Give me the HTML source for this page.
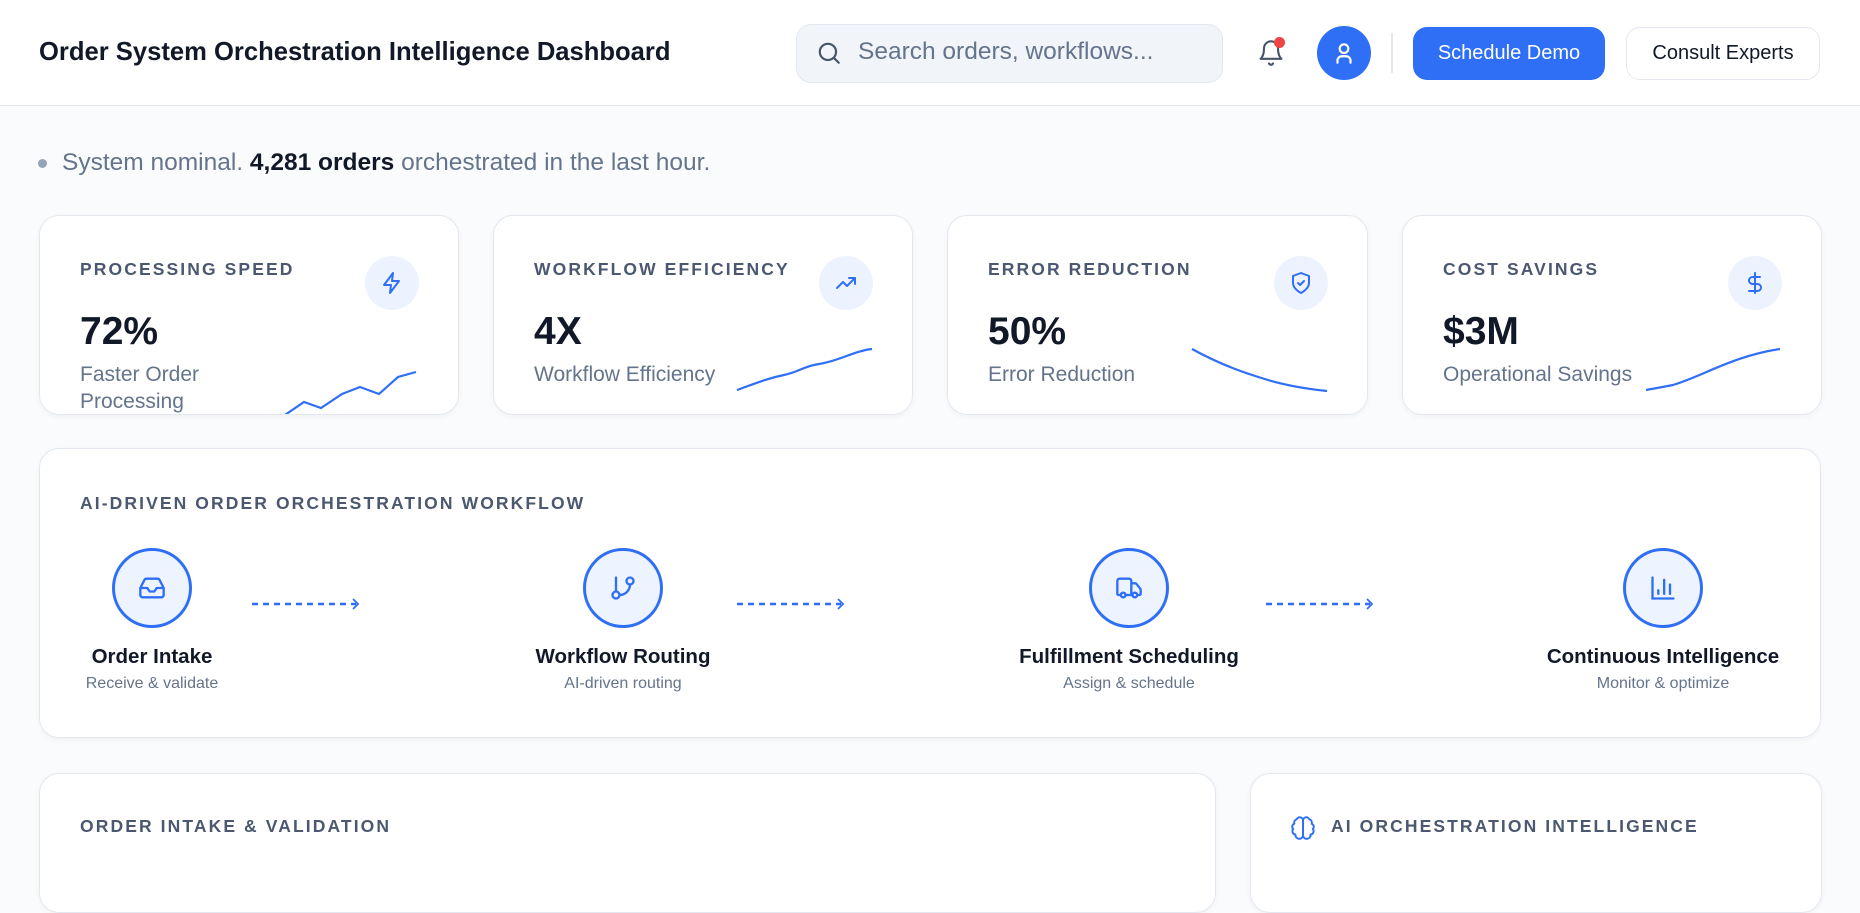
<!DOCTYPE html>
<html><head><meta charset="utf-8"><style>
*{box-sizing:border-box;margin:0;padding:0}
body{width:1860px;height:876px;overflow:hidden;background:#fafbfc;font-family:"Liberation Sans",sans-serif;position:relative;color:#0f172a}
.abs{position:absolute}
.hdr{left:0;top:0;width:1860px;height:106px;background:#fff;border-bottom:1.5px solid #e5e8ee}
.card{position:absolute;background:#fff;border:1.5px solid #e3e8f0;border-radius:20px;box-shadow:0 2px 6px rgba(15,23,42,.04)}
.lbl{position:absolute;font-size:17.5px;font-weight:700;letter-spacing:2.1px;color:#4b5870}
.ic{position:absolute;width:54px;height:54px;border-radius:50%;background:#edf3fe;display:flex;align-items:center;justify-content:center}
.val{position:absolute;font-size:39px;font-weight:700;color:#111827}
.sub{position:absolute;font-size:21px;color:#64748b;line-height:27px}
.node{position:absolute;width:80px;height:80px;border-radius:50%;border:3px solid #2f6ff5;background:#eef4ff;display:flex;align-items:center;justify-content:center}
.nt{position:absolute;width:300px;text-align:center;font-size:20.5px;font-weight:700;color:#111827}
.ns{position:absolute;width:300px;text-align:center;font-size:16px;color:#64748b}
.arr{position:absolute;top:597px;width:110px;height:14px}
</style></head><body>
<div class="abs hdr"></div>
<div class="abs" style="left:39px;top:38px;font-size:25.6px;font-weight:700;color:#111827">Order System Orchestration Intelligence Dashboard</div>
<div class="abs" style="left:796px;top:24px;width:427px;height:59px;background:#f1f4f8;border:1.5px solid #e3e8ef;border-radius:15px"></div>
<svg class="abs" style="left:816px;top:40px" width="26" height="26" viewBox="0 0 24 24" fill="none" stroke="#475569" stroke-width="2" stroke-linecap="round"><circle cx="11" cy="11" r="7.5"/><path d="M21 21l-4.5-4.5"/></svg>
<div class="abs" style="left:858px;top:38px;font-size:24.5px;color:#64748b">Search orders, workflows...</div>
<svg class="abs" style="left:1257px;top:39px" width="28" height="28" viewBox="0 0 24 24" fill="none" stroke="#475569" stroke-width="1.8" stroke-linecap="round" stroke-linejoin="round"><path d="M6 8a6 6 0 0 1 12 0c0 7 3 9 3 9H3s3-2 3-9"/><path d="M10.3 21a1.9 1.9 0 0 0 3.4 0"/></svg>
<div class="abs" style="left:1274px;top:37px;width:11px;height:11px;border-radius:50%;background:#ef4444"></div>
<div class="abs" style="left:1317px;top:26px;width:54px;height:54px;border-radius:50%;background:#2f6ff5"></div>
<svg class="abs" style="left:1331px;top:40px" width="26" height="26" viewBox="0 0 24 24" fill="none" stroke="#fff" stroke-width="2" stroke-linecap="round"><circle cx="12" cy="8" r="4"/><path d="M6 21v-2a4 4 0 0 1 4-4h4a4 4 0 0 1 4 4v2"/></svg>
<div class="abs" style="left:1391px;top:33px;width:1.5px;height:40px;background:#e5e8ee"></div>
<div class="abs" style="left:1413px;top:27px;width:192px;height:53px;border-radius:14px;background:#2f6ff5;color:#fff;font-size:20px;font-weight:500;display:flex;align-items:center;justify-content:center">Schedule Demo</div>
<div class="abs" style="left:1626px;top:27px;width:194px;height:53px;border-radius:14px;background:#fff;border:1.5px solid #e3e8ef;color:#111827;font-size:20px;font-weight:500;display:flex;align-items:center;justify-content:center">Consult Experts</div>

<div class="abs" style="left:38px;top:159px;width:9px;height:9px;border-radius:50%;background:#94a3b8"></div>
<div class="abs" style="left:62px;top:149px;font-size:24.5px;color:#64748b">System nominal. <b style="color:#111827">4,281 orders</b> orchestrated in the last hour.</div>

<!-- cards -->
<div class="card" style="left:39px;top:215px;width:420px;height:200px;overflow:hidden">
<div class="lbl" style="left:40px;top:43px">PROCESSING SPEED</div>
<div class="ic" style="left:325px;top:40px"><svg width="24" height="24" viewBox="0 0 24 24" fill="none" stroke="#2f6ff5" stroke-width="2" stroke-linejoin="round"><path d="M13 2L4 14h7l-1 8 9-12h-7z"/></svg></div>
<div class="val" style="left:40px;top:94px">72%</div>
<div class="sub" style="left:40px;top:145px">Faster Order<br>Processing</div>
<svg class="abs" style="left:0;top:0" width="420" height="200"><path d="M242 201 L264 186 L281 192 L302 178 L320 171 L339 178 L358 161 L376 156" fill="none" stroke="#2f6ff5" stroke-width="2.2"/></svg>
</div>
<div class="card" style="left:493px;top:215px;width:420px;height:200px">
<div class="lbl" style="left:40px;top:43px">WORKFLOW EFFICIENCY</div>
<div class="ic" style="left:325px;top:40px"><svg width="24" height="24" viewBox="0 0 24 24" fill="none" stroke="#2f6ff5" stroke-width="2" stroke-linecap="round" stroke-linejoin="round"><path d="M3 17l6-6 4 4 8-8"/><path d="M15 7h6v6"/></svg></div>
<div class="val" style="left:40px;top:94px">4X</div>
<div class="sub" style="left:40px;top:145px">Workflow Efficiency</div>
<svg class="abs" style="left:0;top:0" width="420" height="200"><path d="M243 174 C265 166 275 162 290 159 C305 156 310 150 325 148 C345 145 360 135 378 133" fill="none" stroke="#2f6ff5" stroke-width="2.2"/></svg>
</div>
<div class="card" style="left:947px;top:215px;width:421px;height:200px">
<div class="lbl" style="left:40px;top:43px">ERROR REDUCTION</div>
<div class="ic" style="left:326px;top:40px"><svg width="24" height="24" viewBox="0 0 24 24" fill="none" stroke="#2f6ff5" stroke-width="2" stroke-linecap="round" stroke-linejoin="round"><path d="M12 22s8-4 8-10V5l-8-3-8 3v7c0 6 8 10 8 10z"/><path d="M9 12l2 2 4-4"/></svg></div>
<div class="val" style="left:40px;top:94px">50%</div>
<div class="sub" style="left:40px;top:145px">Error Reduction</div>
<svg class="abs" style="left:0;top:0" width="421" height="200"><path d="M244 133 C275 150 300 158 320 164 C340 170 360 173 379 175" fill="none" stroke="#2f6ff5" stroke-width="2.2"/></svg>
</div>
<div class="card" style="left:1402px;top:215px;width:420px;height:200px">
<div class="lbl" style="left:40px;top:43px">COST SAVINGS</div>
<div class="ic" style="left:325px;top:40px"><svg width="24" height="24" viewBox="0 0 24 24" fill="none" stroke="#2f6ff5" stroke-width="2" stroke-linecap="round"><path d="M12 2v20"/><path d="M17 6H9.5a3.5 3.5 0 0 0 0 7h5a3.5 3.5 0 0 1 0 7H6"/></svg></div>
<div class="val" style="left:40px;top:94px">$3M</div>
<div class="sub" style="left:40px;top:145px">Operational Savings</div>
<svg class="abs" style="left:0;top:0" width="420" height="200"><path d="M243 174 L270 169 C300 160 330 140 377 133" fill="none" stroke="#2f6ff5" stroke-width="2.2"/></svg>
</div>

<!-- workflow -->
<div class="card" style="left:39px;top:448px;width:1782px;height:290px"></div>
<div class="lbl" style="left:80px;top:493px">AI-DRIVEN ORDER ORCHESTRATION WORKFLOW</div>
<div class="node" style="left:112px;top:548px"><svg width="28" height="28" viewBox="0 0 24 24" fill="none" stroke="#2f6ff5" stroke-width="2" stroke-linejoin="round"><path d="M22 12h-6l-2 3h-4l-2-3H2"/><path d="M5.5 5.1L2 12v6a2 2 0 0 0 2 2h16a2 2 0 0 0 2-2v-6l-3.5-6.9A2 2 0 0 0 16.8 4H7.2a2 2 0 0 0-1.7 1.1z"/></svg></div>
<div class="node" style="left:583px;top:548px"><svg width="28" height="28" viewBox="0 0 24 24" fill="none" stroke="#2f6ff5" stroke-width="2" stroke-linecap="round"><path d="M6 3v12"/><circle cx="18" cy="6" r="3"/><circle cx="6" cy="18" r="3"/><path d="M18 9a9 9 0 0 1-9 9"/></svg></div>
<div class="node" style="left:1089px;top:548px"><svg width="28" height="28" viewBox="0 0 24 24" fill="none" stroke="#2f6ff5" stroke-width="2" stroke-linejoin="round"><path d="M14 18V6a2 2 0 0 0-2-2H4a2 2 0 0 0-2 2v11a1 1 0 0 0 1 1h2"/><path d="M15 18H9"/><path d="M19 18h2a1 1 0 0 0 1-1v-3.6a1 1 0 0 0-.2-.6l-3.5-4.4A1 1 0 0 0 17.5 8H14"/><circle cx="17" cy="18" r="2"/><circle cx="7" cy="18" r="2"/></svg></div>
<div class="node" style="left:1623px;top:548px"><svg width="28" height="28" viewBox="0 0 24 24" fill="none" stroke="#2f6ff5" stroke-width="2" stroke-linecap="round"><path d="M3 3v18h18"/><path d="M18 17V9"/><path d="M13 17V5"/><path d="M8 17v-3"/></svg></div>
<svg class="arr" style="left:252px" viewBox="0 0 110 14"><path d="M0 7H104" stroke="#2f6ff5" stroke-width="2.5" stroke-dasharray="6 5"/><path d="M101 2l5 5-5 5" fill="none" stroke="#2f6ff5" stroke-width="1.8"/></svg>
<svg class="arr" style="left:737px" viewBox="0 0 110 14"><path d="M0 7H104" stroke="#2f6ff5" stroke-width="2.5" stroke-dasharray="6 5"/><path d="M101 2l5 5-5 5" fill="none" stroke="#2f6ff5" stroke-width="1.8"/></svg>
<svg class="arr" style="left:1266px" viewBox="0 0 110 14"><path d="M0 7H104" stroke="#2f6ff5" stroke-width="2.5" stroke-dasharray="6 5"/><path d="M101 2l5 5-5 5" fill="none" stroke="#2f6ff5" stroke-width="1.8"/></svg>
<div class="nt" style="left:2px;top:645px">Order Intake</div><div class="ns" style="left:2px;top:675px">Receive &amp; validate</div>
<div class="nt" style="left:473px;top:645px">Workflow Routing</div><div class="ns" style="left:473px;top:675px">AI-driven routing</div>
<div class="nt" style="left:979px;top:645px">Fulfillment Scheduling</div><div class="ns" style="left:979px;top:675px">Assign &amp; schedule</div>
<div class="nt" style="left:1513px;top:645px">Continuous Intelligence</div><div class="ns" style="left:1513px;top:675px">Monitor &amp; optimize</div>

<!-- bottom -->
<div class="card" style="left:39px;top:773px;width:1177px;height:140px"></div>
<div class="lbl" style="left:80px;top:816px">ORDER INTAKE &amp; VALIDATION</div>
<div class="card" style="left:1250px;top:773px;width:572px;height:140px"></div>
<svg class="abs" style="left:1290px;top:815px" width="26" height="26" viewBox="0 0 24 24" fill="none" stroke="#2f6ff5" stroke-width="1.8" stroke-linejoin="round"><path d="M12 5a3 3 0 0 0-5.8-1A3 3 0 0 0 4 8a3 3 0 0 0-1 5 3 3 0 0 0 2 5 3 3 0 0 0 7 1z"/><path d="M12 5a3 3 0 0 1 5.8-1A3 3 0 0 1 20 8a3 3 0 0 1 1 5 3 3 0 0 1-2 5 3 3 0 0 1-7 1z"/><path d="M12 5v14"/></svg>
<div class="lbl" style="left:1331px;top:816px">AI ORCHESTRATION INTELLIGENCE</div>
</body></html>
